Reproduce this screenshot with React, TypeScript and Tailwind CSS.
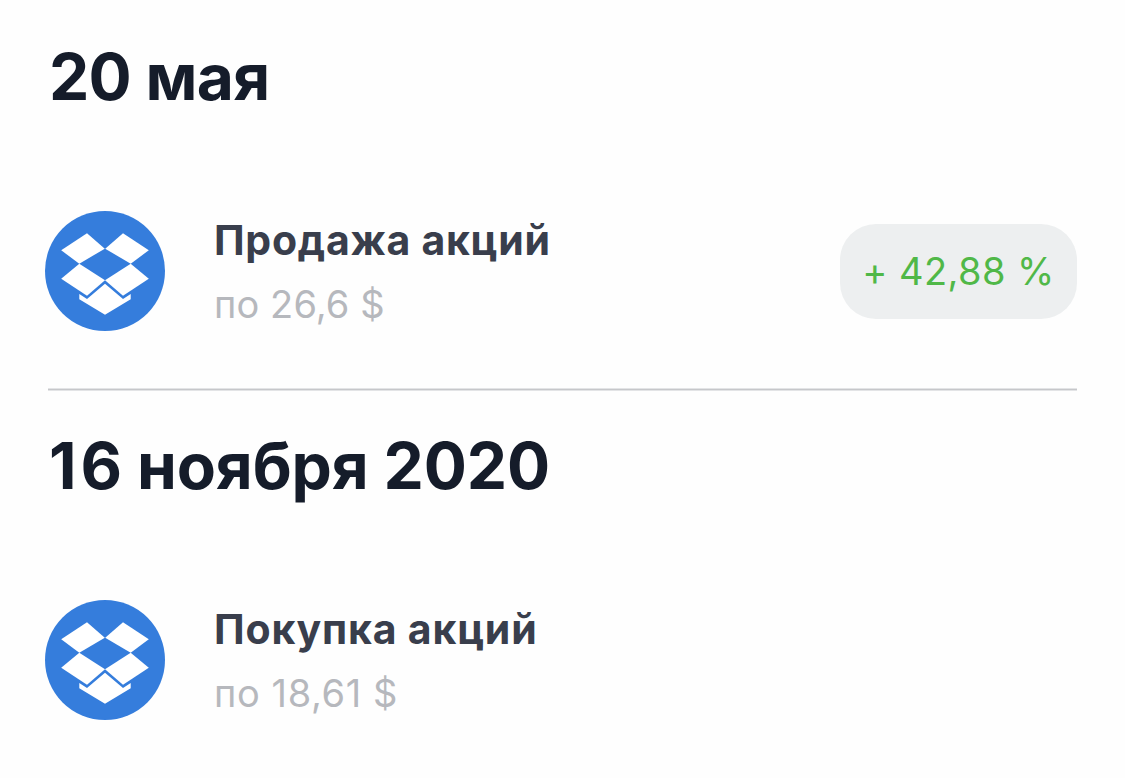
import React from "react";

type Operation = {
  date: string;
  title: string;
  price: string;
  profit?: string;
  dateClass: string;
  titleClass: string;
  priceClass: string;
};

const operations: Operation[] = [
  {
    date: "20 мая",
    title: "Продажа акций",
    price: "по 26,6 $",
    profit: "+ 42,88 %",
    dateClass: "tracking-[-0.7px]",
    titleClass: "tracking-[0.72px]",
    priceClass: "tracking-[0.1px]",
  },
  {
    date: "16 ноября 2020",
    title: "Покупка акций",
    price: "по 18,61 $",
    dateClass: "tracking-[-0.15px] first-letter:tracking-[4px]",
    titleClass: "tracking-[0.82px]",
    priceClass: "tracking-[0.6px]",
  },
];

function DropboxLogo() {
  return (
    <svg viewBox="0 0 120 120" className="size-[120px] shrink-0">
      <circle cx="60" cy="60" r="60" fill="#357ddc" />
      <g fill="#fff">
        <path d="M16.2 39.3 42 22.3 59.8 37.7 34.3 52.7Z" />
        <path d="M103.8 39.3 78 22.3 60.2 37.7 85.7 52.7Z" />
        <path d="M34.3 52.7 16.2 67.7 42 84.7 60 69.3Z" />
        <path d="M85.7 52.7 103.8 67.7 78 84.7 60 69.3Z" />
        <path d="M34.3 83 42 88 60 72.7 78 88 85.7 83V88.3L60 103.7 34.3 88.3Z" />
      </g>
    </svg>
  );
}

function OperationRow({ operation }: { operation: Operation }) {
  return (
    <div className="flex h-32 items-center">
      <DropboxLogo />
      <div className="ml-[49px] flex-1 pt-0.5 whitespace-nowrap">
        <h3 className={`text-[41px] leading-16 font-bold text-[#393e4c] ${operation.titleClass}`}>
          {operation.title}
        </h3>
        <p className={`text-[38px] leading-16 text-[#b6b8bd] ${operation.priceClass}`}>{operation.price}</p>
      </div>
      {operation.profit && (
        <div className="flex h-[95px] w-[237px] items-center justify-center rounded-[36px] bg-[#edeff0] text-[38px] tracking-[0.4px] whitespace-nowrap text-[#50b848]">
          {operation.profit}
        </div>
      )}
    </div>
  );
}

export default function App() {
  return (
    <main className="min-h-screen bg-[#fefefe] font-['Inter',sans-serif]">
      {operations.map((operation, index) => (
        <section key={operation.date} className="h-[389px] pt-[37px] pr-12 pl-[45px]">
          <h2 className={`ml-1 text-[64px] leading-20 font-bold text-[#151c2a] ${operation.dateClass}`}>
            {operation.date}
          </h2>
          <div className="mt-[90px]">
            <OperationRow operation={operation} />
          </div>
          {index < operations.length - 1 && (
            <div className="mt-[53px] ml-[3px] h-[3px] border-y border-[#e3e4e6] bg-[#c6c7ca]" />
          )}
        </section>
      ))}
    </main>
  );
}
